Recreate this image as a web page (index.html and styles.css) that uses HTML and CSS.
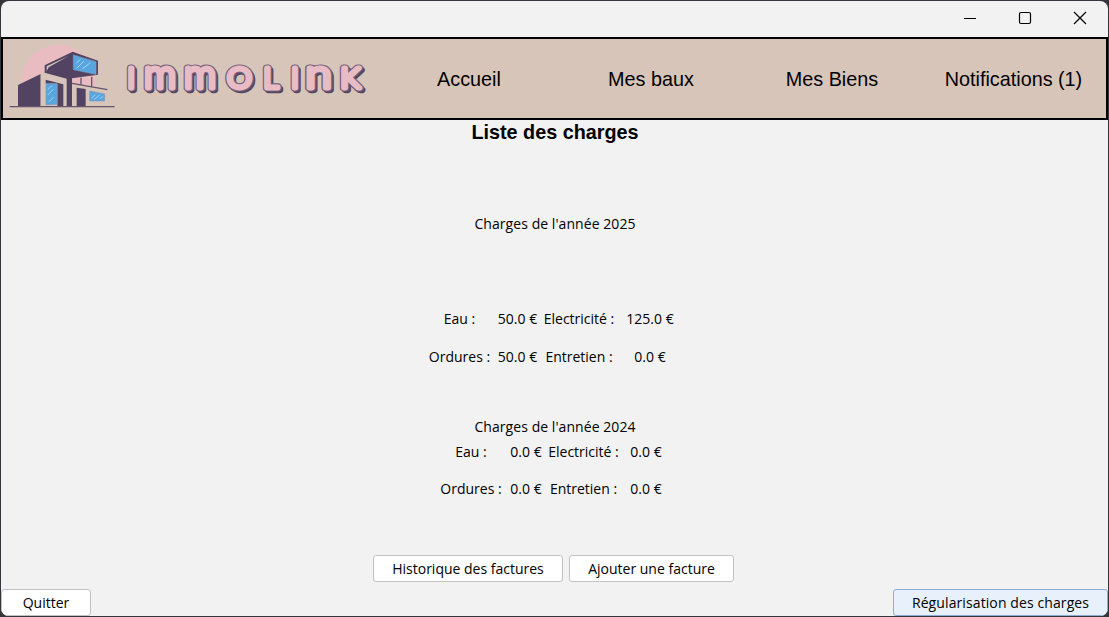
FILE: index.html
```html
<!DOCTYPE html>
<html lang="fr">
<head>
<meta charset="utf-8">
<title>Immolink</title>
<link rel="stylesheet" href="styles.css">
</head>
<body>
<div class="window">
  <div class="titlebar">
    <svg class="control" viewBox="0 0 14 14"><path d="M1 7.5H13"/></svg>
    <svg class="control" viewBox="0 0 14 14"><rect x="1.5" y="1.5" width="11" height="11" rx="1.5"/></svg>
    <svg class="control" viewBox="0 0 14 14"><path d="M1 1L13 13M13 1L1 13"/></svg>
  </div>
  <header class="header">
    <svg class="logo" viewBox="3 39 369 79" role="img" aria-label="Immolink">
      <defs>
        <g id="brand">
          <text transform="translate(127.4 88.3)">I</text>
          <text class="small" transform="translate(143.9 88.3) scale(1.02 1)">M</text>
          <text class="small" transform="translate(183.9 88.3) scale(1.02 1)">M</text>
          <text transform="translate(227.3 88.3) scale(1.1 1)">O</text>
          <text transform="translate(263.4 88.3) scale(1.05 1)">L</text>
          <text transform="translate(291.3 88.3)">I</text>
          <text class="small" transform="translate(305.4 88.3) scale(1.22 1)">N</text>
          <text transform="translate(340.6 88.3) scale(1.1 1)">K</text>
        </g>
      </defs>
      <g transform="translate(0 36) scale(.33333)">
        <path class="sun" d="M64 150A110 110 0 0 1 172 27A115 115 0 0 1 288 152Z"/>
        <path class="dark" d="M54 147L122 114V211H54Z"/>
        <path class="wall" d="M122 112L134 109L202 128V210H190V147L134 132V210H122Z"/>
        <path class="dark" d="M134 88L218 47L294 74V116L216 127V210H200V128L134 110Z"/>
        <path class="wall" d="M140 91L207 59L146 94L140 105Z"/>
        <path class="glass" d="M220 57L288 77V115L220 101Z"/>
        <path class="dark" d="M137 131L190 145V210H172V143H137Z"/>
        <path class="glass" d="M138 143H171V205L138 207Z"/>
        <path class="wall" d="M217 143L321 162V210H257V158L230 154V210H217Z"/>
        <path class="dark" d="M230 155L257 159V210H230Z"/>
        <path class="glass" d="M269 165L314 174V195H269Z"/>
        <path class="beam" d="M216 142L322 161M243 125V145M275 122V151M29 212H344"/>
        <path class="shine" d="M230 81L241 70M231 96L251 76M248 98L270 81M144 160L156 149M144 176L160 160M147 197L159 185M276 185L285 177M283 190L298 178M301 188L309 181"/>
      </g>
      <use class="brand-shadow" href="#brand" x="1.8" y="2"/>
      <use class="brand-edge" href="#brand"/>
      <use class="brand-face" href="#brand"/>
    </svg>
    <nav class="nav">
      <a class="link link-home">Accueil</a>
      <a class="link link-leases">Mes baux</a>
      <a class="link link-goods">Mes Biens</a>
      <a class="link link-alerts">Notifications (1)</a>
    </nav>
  </header>
  <main class="content">
    <h1 class="title">Liste des charges</h1>
    <section class="year year-current">
      <h2 class="year-title">Charges de l'année 2025</h2>
      <div class="charges">
        <span>Eau :</span><span>50.0 €</span><span>Electricité :</span><span>125.0 €</span>
        <span>Ordures :</span><span>50.0 €</span><span>Entretien :</span><span>0.0 €</span>
      </div>
    </section>
    <section class="year year-previous">
      <h2 class="year-title">Charges de l'année 2024</h2>
      <div class="charges">
        <span>Eau :</span><span>0.0 €</span><span>Electricité :</span><span>0.0 €</span>
        <span>Ordures :</span><span>0.0 €</span><span>Entretien :</span><span>0.0 €</span>
      </div>
    </section>
    <div class="actions">
      <button class="button history"><span>Historique des factures</span></button>
      <button class="button add"><span>Ajouter une facture</span></button>
    </div>
  </main>
  <footer class="footer">
    <button class="button quit"><span>Quitter</span></button>
    <button class="button adjust"><span>Régularisation des charges</span></button>
  </footer>
</div>
</body>
</html>
```
FILE: styles.css
```css
* { box-sizing: border-box; }
body {
  margin: 0;
  padding: 1px;
  height: 617px;
  overflow: hidden;
  background: #35353b;
  color: #000;
  font: 14px/20px "Open Sans", "Noto Sans", sans-serif;
}
.window {
  display: flex;
  flex-direction: column;
  width: 1107px;
  height: 615px;
  overflow: hidden;
  border-radius: 8px;
  background: #f2f2f2;
}
.titlebar {
  display: flex;
  flex: none;
  justify-content: flex-end;
  align-items: center;
  gap: 41px;
  height: 36px;
  padding: 0 21px 2px 0;
}
.control { width: 14px; height: 14px; fill: none; stroke: #000; stroke-width: 1.2; }
.header {
  display: flex;
  flex: none;
  height: 83px;
  border: 2px solid #000;
  background: #d8c5b9;
}
.logo { flex: none; width: 369px; height: 79px; }
.sun { fill: #e8bcc1; }
.dark { fill: #514361; }
.wall { fill: #d8c5b9; }
.glass { fill: #58a6df; stroke: #8299b9; stroke-width: 2; }
.beam { fill: none; stroke: #66536c; stroke-width: 4; }
.shine { stroke: #a2d3f3; stroke-width: 3; stroke-linecap: round; }
#brand text { font-family: Lato, "Open Sans", sans-serif; font-size: 28px; font-weight: 300; stroke-linejoin: round; }
#brand .small { font-size: 39px; text-transform: lowercase; }
.brand-shadow { fill: #554762; stroke: #554762; stroke-width: 6.6px; }
.brand-edge { fill: #75617a; stroke: #75617a; stroke-width: 7.2px; }
.brand-face { fill: #e8bcc4; stroke: #e8bcc4; stroke-width: 4.8px; }
.nav {
  display: flex;
  align-items: center;
  font: 19.8px/24px "Liberation Sans", Arial, sans-serif;
}
.link { white-space: nowrap; text-align: center; }
.link-home { width: 194px; }
.link-leases { width: 170px; }
.link-goods { width: 192px; }
.link-alerts { width: 171px; }
.content { display: flex; flex: 1; flex-direction: column; align-items: center; }
.title { margin: 0 0 0 1px; font: bold 19.8px/24px "Liberation Sans", Arial, sans-serif; }
.year { display: flex; flex-direction: column; align-items: center; }
.year-title { margin: 0 0 0 1px; font: inherit; letter-spacing: .06px; }
.year-current { margin-top: 70px; }
.year-previous { margin-top: 50px; }
.charges { display: grid; row-gap: 18px; white-space: nowrap; }
.charges span { display: flex; justify-content: center; }
.year-current .charges { grid-template-columns: 60px 56px 67px 75px; margin: 75px -8px 0 0; }
.year-previous .charges { grid-template-columns: 60px 50px 65px 60px; margin: 5px -8px 0 0; row-gap: 17px; }
.actions { display: flex; gap: 6px; margin: 56px 2px 0 0; }
.button {
  display: flex;
  justify-content: center;
  align-items: center;
  height: 27px;
  padding: 0;
  border: 1px solid #c2c2c2;
  border-radius: 3px;
  background: #fff;
  color: #000;
  font: inherit;
  white-space: nowrap;
}
.history { width: 190px; }
.add { width: 165px; }
.footer { display: flex; flex: none; justify-content: space-between; height: 27px; }
.quit { width: 90px; }
.adjust { width: 215px; border-color: #8bacd4; background: #e8f1fb; letter-spacing: .1px; }
```
